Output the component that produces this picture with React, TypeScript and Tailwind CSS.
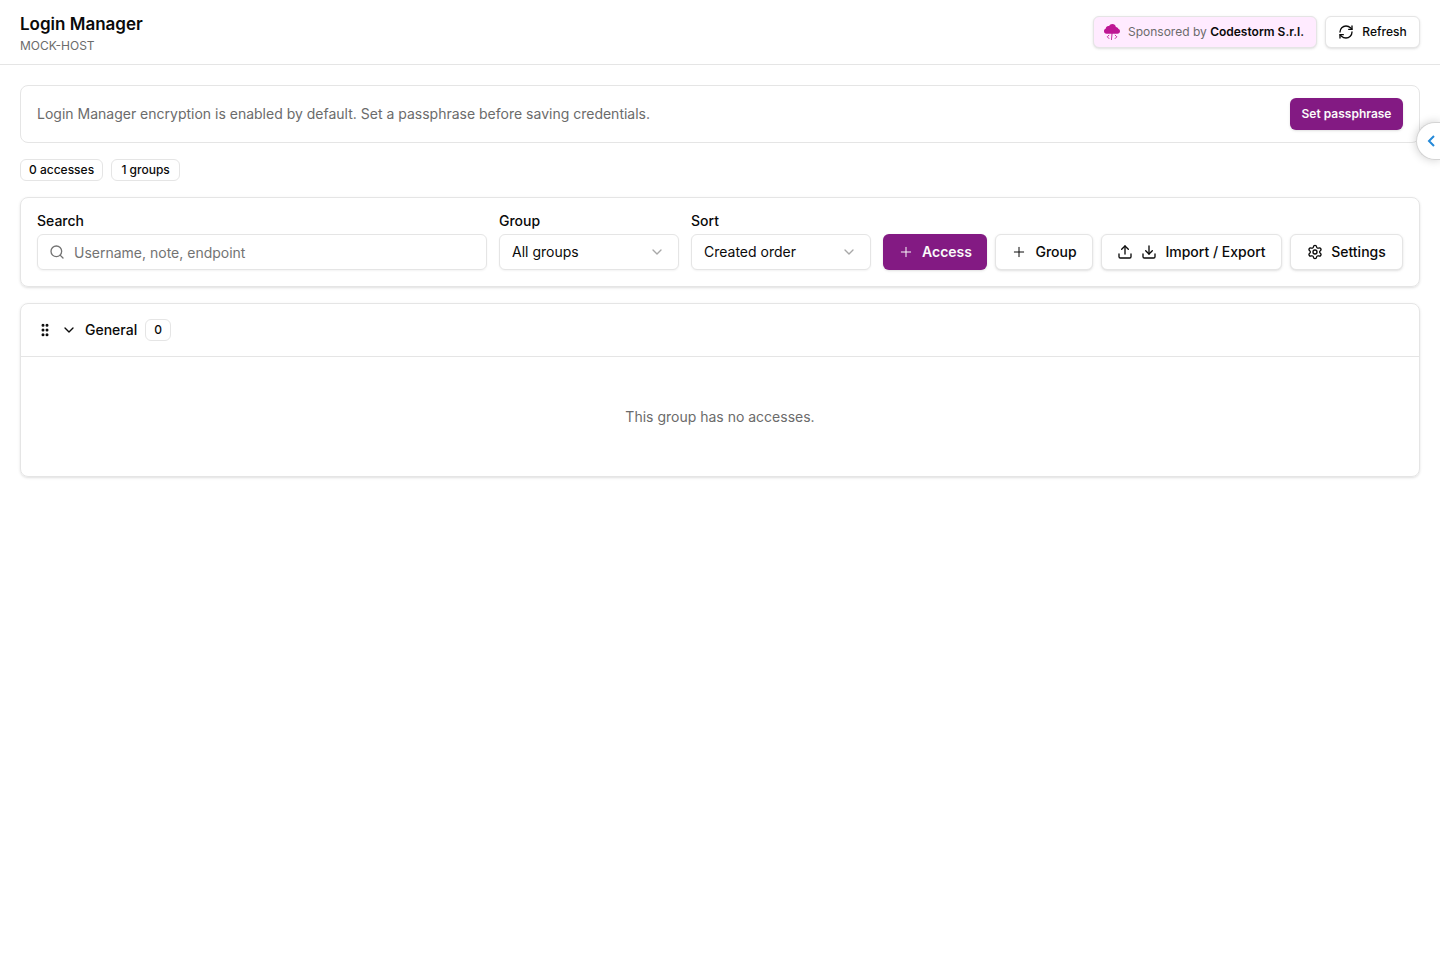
import { useState } from "react";
import type { ReactNode } from "react";
import {
  ChevronDown,
  Download,
  GripVertical,
  Plus,
  RefreshCw,
  Search,
  Settings,
  Upload,
} from "lucide-react";

const outline =
  "inline-flex items-center justify-center gap-2 whitespace-nowrap rounded-md border border-neutral-200 bg-white font-medium shadow-sm hover:bg-neutral-50";
const primary =
  "inline-flex items-center justify-center gap-2 whitespace-nowrap rounded-md bg-[#831a83] font-semibold text-neutral-50 shadow-sm hover:bg-[#701570]";

function Badge({ children, className = "" }: { children: ReactNode; className?: string }) {
  return (
    <span
      className={`inline-flex items-center justify-center rounded-md border border-neutral-200 px-2 py-0.5 text-xs font-medium ${className}`}
    >
      {children}
    </span>
  );
}

function StormLogo() {
  return (
    <svg viewBox="0 0 16 16" className="size-4 shrink-0" aria-hidden="true">
      <path
        d="M2.800 9.700A2.700 2.700 0 0 1 0 7c0-1.300.7-2.200 1.800-2.600C1.900 2.900 3 2 4.300 2c.3 0 .5 0 .8.1C5.700.8 6.800 0 8.300 0c1.900 0 3.300 1.200 3.600 2.900 1.300.1 2.300.9 2.500 2.100 1 .4 1.600 1.200 1.600 2.200 0 1.400-1.100 2.500-2.600 2.500H8.500L7.900 16H7.100l.4-6.300z"
        fill="#be1694"
      />
      <path
        d="M5.200 10.900 3.300 12.800 5.200 14.800M10.900 10.900l1.900 1.900-1.900 2"
        fill="none"
        stroke="#be1694"
        strokeWidth="0.9"
      />
    </svg>
  );
}

function SelectField({ id, label, options }: { id: string; label: string; options: string[] }) {
  return (
    <div className="grid w-[180px] gap-1.5">
      <label htmlFor={id} className="text-sm leading-none font-medium">
        {label}
      </label>
      <div className="relative">
        <select
          id={id}
          className="h-9 w-full appearance-none rounded-md border border-neutral-200 bg-white px-3 text-sm shadow-xs"
        >
          {options.map((option) => (
            <option key={option}>{option}</option>
          ))}
        </select>
        <ChevronDown className="pointer-events-none absolute top-2.5 right-3.5 size-4 opacity-35" />
      </div>
    </div>
  );
}

export default function App() {
  const [open, setOpen] = useState(true);

  return (
    <div className="min-h-screen bg-white font-[Inter,sans-serif] text-neutral-950">
      <header className="flex items-center justify-between border-b border-neutral-200 px-5 py-2.5">
        <div>
          <h1 className="text-[17px] leading-7 font-semibold">Login Manager</h1>
          <p className="text-xs text-[#6b6b6b]">MOCK-HOST</p>
        </div>
        <div className="flex items-center gap-2">
          <a
            href="#sponsor"
            className="inline-flex h-8 min-w-56 items-center gap-2 rounded-md border border-neutral-200 bg-[#ffebff] px-2.5 text-xs shadow-sm"
          >
            <StormLogo />
            <span className="text-[#6b6b6b]">
              Sponsored by <strong className="font-semibold text-neutral-950">Codestorm S.r.l.</strong>
            </span>
          </a>
          <button type="button" className={`${outline} h-8 min-w-[95px] px-3 text-xs`}>
            <RefreshCw className="size-4" />
            Refresh
          </button>
        </div>
      </header>

      <main className="flex flex-col gap-4 p-5">
        <section className="flex items-center justify-between gap-4 rounded-lg border border-neutral-200 px-4 py-3">
          <p className="text-sm text-[#6b6b6b]">
            Login Manager encryption is enabled by default. Set a passphrase before saving credentials.
          </p>
          <button type="button" className={`${primary} h-8 w-[113px] text-xs`}>
            Set passphrase
          </button>
        </section>

        <div className="flex gap-2">
          <Badge>0 accesses</Badge>
          <Badge className="min-w-[69px]">1 groups</Badge>
        </div>

        <section className="flex items-end gap-3 rounded-lg border border-neutral-200 p-4 shadow-sm">
          <div className="grid flex-1 gap-1.5">
            <label htmlFor="search" className="text-sm leading-none font-medium">
              Search
            </label>
            <div className="relative">
              <Search className="pointer-events-none absolute top-2.5 left-3 size-4 text-neutral-500" />
              <input
                id="search"
                type="text"
                placeholder="Username, note, endpoint"
                className="h-9 w-full rounded-md border border-neutral-200 pr-3 pl-9 text-sm shadow-xs placeholder:text-neutral-500"
              />
            </div>
          </div>
          <SelectField id="group" label="Group" options={["All groups", "General"]} />
          <SelectField id="sort" label="Sort" options={["Created order", "Username"]} />
          <div className="flex gap-2">
            <button type="button" className={`${primary} h-9 w-[104px] text-sm`}>
              <Plus className="size-4" strokeWidth={1.5} />
              Access
            </button>
            <button type="button" className={`${outline} h-9 w-[98px] text-sm`}>
              <Plus className="size-4" strokeWidth={1.5} />
              Group
            </button>
            <button type="button" className={`${outline} h-9 w-[181px] text-sm`}>
              <Upload className="size-4" />
              <Download className="size-4" />
              Import / Export
            </button>
            <button type="button" className={`${outline} h-9 w-[113px] text-sm`}>
              <Settings className="size-4" />
              Settings
            </button>
          </div>
        </section>

        <section className="rounded-lg border border-neutral-200 shadow-sm">
          <div className="flex h-[53px] items-center gap-2 border-b border-neutral-200 px-4">
            <button type="button" aria-label="Reorder group" className="cursor-grab">
              <GripVertical className="size-4" strokeWidth={2.5} />
            </button>
            <button
              type="button"
              aria-expanded={open}
              onClick={() => setOpen(!open)}
              className="flex items-center gap-2 text-sm font-medium"
            >
              <ChevronDown className="size-4" />
              General
            </button>
            <Badge>0</Badge>
          </div>
          {open && (
            <div className="flex min-h-[119px] items-center justify-center px-4">
              <p className="text-sm text-[#6b6b6b]">This group has no accesses.</p>
            </div>
          )}
        </section>
      </main>

      <button
        type="button"
        aria-label="Open side panel"
        className="fixed top-[122px] right-0 flex h-[38px] w-6 items-center justify-end rounded-l-full border border-r-0 border-neutral-300 bg-white shadow-[0_0_10px_rgba(0,0,0,0.2)]"
      >
        <svg viewBox="0 0 16 16" className="size-4" fill="none" stroke="#2489d8" strokeWidth="2" aria-hidden="true">
          <path d="M10 3 5 8l5 5" />
        </svg>
      </button>
    </div>
  );
}
